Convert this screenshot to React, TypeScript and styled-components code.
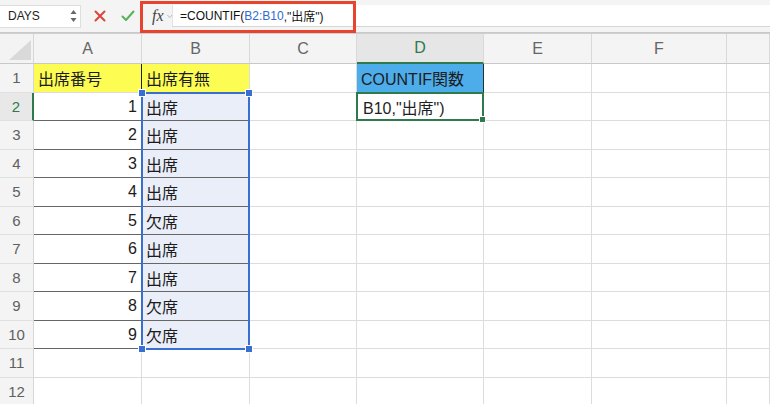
import React from "react";
import styled, { createGlobalStyle, css } from "styled-components";

const GlobalStyle = createGlobalStyle`
  html, body {
    margin: 0;
    padding: 0;
    background: #ffffff;
    overflow: hidden;
  }
  body {
    font-family: "Liberation Sans", "Noto Sans CJK JP", sans-serif;
    color: #1f1f1f;
  }
`;

const Page = styled.div`
  width: 770px;
  height: 404px;
  overflow: hidden;
  display: flex;
  flex-direction: column;
`;

/* ---------- toolbar ---------- */

const Toolbar = styled.div`
  position: relative;
  height: 32px;
  flex: none;
  display: flex;
  align-items: center;
  background: #f4f4f4;
  border-bottom: 1px solid #c9c9c9;
`;

const NameBox = styled.div`
  width: 81px;
  height: 23px;
  box-sizing: border-box;
  background: #ffffff;
  border: 1px solid #dedede;
  border-left: none;
  display: flex;
  align-items: center;
  justify-content: space-between;
  padding: 0 3px 0 8px;
  font-size: 12px;
  color: #222;
`;

const Spinner = styled.svg`
  width: 7px;
  height: 14px;
`;

const ButtonRow = styled.div`
  display: flex;
  margin-left: 5px;
`;

const ActionButton = styled.div`
  width: 28px;
  height: 24px;
  display: flex;
  align-items: center;
  justify-content: center;
`;

const FxLabel = styled.div`
  display: flex;
  align-items: center;
  gap: 3px;
  margin-left: 10px;
  width: 20px;
  font-family: "Liberation Serif", "DejaVu Serif", serif;
  font-style: italic;
  font-size: 16px;
  color: #444;
`;

const FormulaInput = styled.div`
  flex: 1;
  height: 21px;
  margin-left: 0;
  background: #ffffff;
  border-left: 1px solid #e2e2e2;
  border-bottom: 1px solid #d6d6d6;
  display: flex;
  align-items: center;
  padding-left: 7px;
  font-size: 12px;
  color: #111;
`;

const RefText = styled.span`
  color: #2e6bd0;
`;

const Highlight = styled.div`
  position: absolute;
  left: 140px;
  top: 1px;
  width: 216px;
  height: 32px;
  box-sizing: border-box;
  border: 3px solid #e8432d;
  pointer-events: none;
`;

/* ---------- sheet ---------- */

const gridTemplate = css`
  display: grid;
  grid-template-columns: 34px 108px 108px 107px 127px 108px 135px 1fr;
  grid-template-rows: 30px repeat(12, 28.5px);
`;

const SheetWrap = styled.div`
  position: relative;
  flex: 1;
  border-top: 1px solid #d0d0d0;
`;

const Sheet = styled.div`
  ${gridTemplate}
`;

const OverlayGrid = styled.div`
  ${gridTemplate}
  position: absolute;
  inset: 0;
  pointer-events: none;
`;

const Corner = styled.div`
  background: #f3f3f3;
  border-right: 1px solid #d6d6d6;
  border-bottom: 1px solid #c8c8c8;
  box-sizing: border-box;
  display: flex;
  align-items: flex-end;
  justify-content: flex-end;
  padding: 0 2px 3px 0;
`;

const ColHeader = styled.div<{ $active?: boolean }>`
  box-sizing: border-box;
  background: ${(p) => (p.$active ? "#e6e6e6" : "#f4f4f4")};
  border-right: 1px solid #d9d9d9;
  border-bottom: ${(p) => (p.$active ? "2px solid #2f7a4d" : "1px solid #c8c8c8")};
  display: flex;
  align-items: center;
  justify-content: center;
  font-size: 16px;
  color: ${(p) => (p.$active ? "#2f7a4d" : "#666")};
`;

const RowHeader = styled.div<{ $active?: boolean }>`
  box-sizing: border-box;
  background: ${(p) => (p.$active ? "#e8e8e8" : "#f4f4f4")};
  border-right: ${(p) => (p.$active ? "2px solid #2f7a4d" : "1px solid #d6d6d6")};
  border-bottom: 1px solid #e0e0e0;
  display: flex;
  align-items: center;
  justify-content: center;
  font-size: 15px;
  color: ${(p) => (p.$active ? "#2f7a4d" : "#606060")};
`;

const Cell = styled.div<{
  $bg?: string;
  $right?: boolean;
  $dark?: boolean;
  $edge?: string;
}>`
  box-sizing: border-box;
  background: ${(p) => p.$bg || "#ffffff"};
  border-right: 1px solid ${(p) => p.$edge || "#dcdcdc"};
  border-bottom: 1px solid ${(p) => (p.$dark ? "#666" : "#dcdcdc")};
  display: flex;
  align-items: center;
  justify-content: ${(p) => (p.$right ? "flex-end" : "flex-start")};
  padding: 1px 4px 0 4px;
  font-size: 16px;
  white-space: nowrap;
  overflow: hidden;
  color: #1c1c1c;
`;

const ActiveCell = styled.div`
  position: relative;
  box-sizing: border-box;
  background: #ffffff;
  border: 2px solid #2f7a4d;
  margin: -1px 0 0 -1px;
  display: flex;
  align-items: center;
  padding: 1px 4px 0 5px;
  font-size: 16px;
  white-space: nowrap;
`;

const FillHandle = styled.span`
  position: absolute;
  right: -4px;
  bottom: -4px;
  width: 5px;
  height: 5px;
  background: #2f7a4d;
  border: 1px solid #fff;
`;

const Selection = styled.div`
  grid-column: 3 / 4;
  grid-row: 3 / 12;
  position: relative;
  border: 2px solid #3a6fd2;
  margin: -1px 0 -1px -1px;
`;

const Knob = styled.span<{ $x: "l" | "r"; $y: "t" | "b" }>`
  position: absolute;
  width: 6px;
  height: 6px;
  background: #3a6fd2;
  border: 1px solid #fff;
  ${(p) => (p.$x === "l" ? "left: -5px;" : "right: -5px;")}
  ${(p) => (p.$y === "t" ? "top: -5px;" : "bottom: -5px;")}
`;

const columns = ["A", "B", "C", "D", "E", "F", ""];
const attendance = ["出席", "出席", "出席", "出席", "欠席", "出席", "出席", "欠席", "欠席"];

const YELLOW = "#fcfc52";
const BLUE_FILL = "#4cadea";
const SEL_FILL = "#e9eef8";

const renderCell = (r: number, c: number) => {
  const key = `${r}-${c}`;
  if (r === 1 && c === 0)
    return (
      <Cell key={key} $bg={YELLOW} $edge="#222">
        出席番号
      </Cell>
    );
  if (r === 1 && c === 1)
    return (
      <Cell key={key} $bg={YELLOW}>
        出席有無
      </Cell>
    );
  if (r === 1 && c === 3)
    return (
      <Cell key={key} $bg={BLUE_FILL} $edge="#233">
        COUNTIF関数
      </Cell>
    );
  if (r === 2 && c === 3)
    return (
      <ActiveCell key={key}>
        B10,"出席")
        <FillHandle />
      </ActiveCell>
    );
  if (r >= 2 && r <= 10 && c === 0)
    return (
      <Cell key={key} $right $dark>
        {r - 1}
      </Cell>
    );
  if (r >= 2 && r <= 10 && c === 1)
    return (
      <Cell key={key} $bg={SEL_FILL} $dark>
        {attendance[r - 2]}
      </Cell>
    );
  return <Cell key={key} />;
};

const App = () => {
  const rows: React.ReactNode[] = [];
  for (let r = 1; r <= 12; r++) {
    rows.push(
      <RowHeader key={`h${r}`} $active={r === 2}>
        {r}
      </RowHeader>
    );
    for (let c = 0; c < columns.length; c++) rows.push(renderCell(r, c));
  }

  return (
    <>
      <GlobalStyle />
      <Page>
        <Toolbar>
          <NameBox>
            DAYS
            <Spinner viewBox="0 0 7 14">
              <path d="M3.5 1 L6.5 5 L0.5 5 Z" fill="#666" />
              <path d="M3.5 13 L6.5 9 L0.5 9 Z" fill="#666" />
            </Spinner>
          </NameBox>
          <ButtonRow>
            <ActionButton>
              <svg width="12" height="12" viewBox="0 0 12 12">
                <path d="M1.5 1.5 L10.5 10.5 M10.5 1.5 L1.5 10.5" stroke="#d9453b" strokeWidth="2" strokeLinecap="round" />
              </svg>
            </ActionButton>
            <ActionButton>
              <svg width="14" height="12" viewBox="0 0 14 12">
                <path d="M1.5 6.5 L5 10 L12.5 1.5" stroke="#58b25a" strokeWidth="2" fill="none" strokeLinecap="round" strokeLinejoin="round" />
              </svg>
            </ActionButton>
          </ButtonRow>
          <FxLabel>
            fx
            <svg width="7" height="5" viewBox="0 0 7 5">
              <path d="M0.5 0.5 L3.5 4 L6.5 0.5" stroke="#aaa" fill="none" strokeWidth="1" />
            </svg>
          </FxLabel>
          <FormulaInput>
            =COUNTIF(<RefText>B2:B10</RefText>,"出席")
          </FormulaInput>
          <Highlight />
        </Toolbar>
        <SheetWrap>
          <Sheet>
            <Corner>
              <svg width="22" height="20" viewBox="0 0 22 20">
                <path d="M0 20 L22 20 L22 0 Z" fill="#d9d9d9" />
              </svg>
            </Corner>
            {columns.map((c, i) => (
              <ColHeader key={`c${i}`} $active={c === "D"}>
                {c}
              </ColHeader>
            ))}
            {rows}
          </Sheet>
          <OverlayGrid>
            <Selection>
              <Knob $x="l" $y="t" />
              <Knob $x="r" $y="t" />
              <Knob $x="l" $y="b" />
              <Knob $x="r" $y="b" />
            </Selection>
          </OverlayGrid>
        </SheetWrap>
      </Page>
    </>
  );
};

export default App;
